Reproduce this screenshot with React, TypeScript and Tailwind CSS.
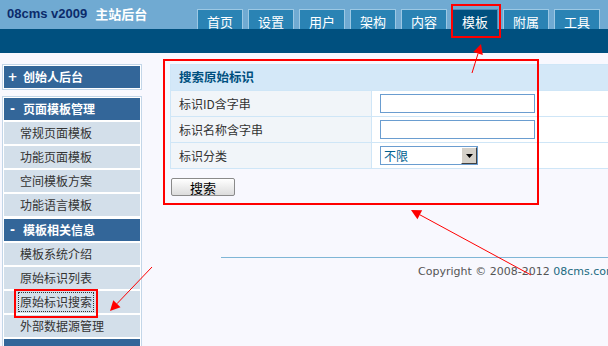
import React from 'react';

const cjk = { fontFamily: '"Noto Sans CJK SC", "Liberation Sans", sans-serif' };

const tabs = ['首页', '设置', '用户', '架构', '内容', '模板', '附属', '工具'];

interface SideBlock {
  title: string;
  open: boolean;
  items: string[];
}

const blocks: SideBlock[] = [
  { title: '创始人后台', open: false, items: [] },
  { title: '页面模板管理', open: true, items: ['常规页面模板', '功能页面模板', '空间模板方案', '功能语言模板'] },
  { title: '模板相关信息', open: true, items: ['模板系统介绍', '原始标识列表', '原始标识搜索', '外部数据源管理'] },
];

// red annotation arrow, head drawn at (x2, y2)
function Arrow({ x1, y1, x2, y2 }: { x1: number; y1: number; x2: number; y2: number }) {
  const a = Math.atan2(y2 - y1, x2 - x1);
  const len = 10;
  const w = 5;
  const bx = x2 - Math.cos(a) * len;
  const by = y2 - Math.sin(a) * len;
  const p1 = `${bx + Math.sin(a) * w},${by - Math.cos(a) * w}`;
  const p2 = `${bx - Math.sin(a) * w},${by + Math.cos(a) * w}`;
  return (
    <g>
      <line x1={x1} y1={y1} x2={bx} y2={by} stroke="#ff0000" strokeWidth="1" />
      <polygon points={`${x2},${y2} ${p1} ${p2}`} fill="#ff0000" />
    </g>
  );
}

export default function App() {
  return (
    <div className="relative w-[608px] h-[346px] overflow-hidden bg-[#f8f8fe] text-[12px]" style={cjk}>
      {/* Header */}
      <div className="h-[29px] bg-[#70aad2] flex items-end">
        <div className="w-[197px] h-full flex items-center pl-[7px] pb-[1px] font-bold text-[13px]">
          <span className="text-[#0b2b6b]" style={{ fontFamily: '"Liberation Sans", sans-serif' }}>08cms v2009</span>
          <span className="text-white ml-[8px]">主站后台</span>
        </div>
        <div className="flex items-end gap-[5px]">
          {tabs.map((t) => (
            <div
              key={t}
              className={`w-[46px] h-[20px] border border-b-0 flex items-center justify-center text-white text-[13px] leading-none pt-[3px] ${
                t === '模板' ? 'bg-[#00507f] border-[#4f8cb8]' : 'bg-[#2a83b4] border-[#9cc8e4]'
              }`}
            >
              {t}
            </div>
          ))}
        </div>
      </div>
      <div className="h-[24px] bg-[#00507f]" />

      {/* Body */}
      <div className="flex">
        {/* Sidebar */}
        <div className="w-[142px] pl-[2px] pt-[11px] flex flex-col">
          {blocks.map((b, bi) => (
            <div
              key={b.title}
              className={`border border-[#c3d6e8] bg-white p-[1px] flex flex-col gap-[2px] ${bi === 0 ? 'mb-[6px]' : bi === 1 ? 'border-b-0 pb-[2px]' : 'border-t-0 h-[200px]'}`}
            >
              <div className="h-[22px] bg-[#336699] text-white font-bold flex items-center">
                <span className="w-[17px] text-center" style={{ fontFamily: '"DejaVu Sans", sans-serif' }}>{b.open ? '-' : '+'}</span>
                <span className="ml-[2px]">{b.title}</span>
              </div>
              {b.items.map((it) => (
                <div key={it} className="h-[22px] bg-[#d3dfea] text-[#333333] flex items-center pl-[15px]">
                  <span className={it === '原始标识搜索' ? 'outline outline-1 outline-dotted outline-[#333] px-[1px] leading-[18px]' : 'px-[1px]'}>{it}</span>
                </div>
              ))}
              {bi === 2 && <div className="h-[22px] bg-[#336699]" />}
            </div>
          ))}
        </div>

        {/* Main content */}
        <div className="flex-1 pl-[28px] pt-[11px] min-w-0">
          <div className="w-[460px] border border-[#cfe6f7]">
            <div className="h-[25px] bg-[#d4e8f8] text-[#00507f] font-bold flex items-center pl-[8px] text-[12.5px]">搜索原始标识</div>
            {['标识ID含字串', '标识名称含字串', '标识分类'].map((label, i) => (
              <div key={label} className="h-[26px] flex border-t border-[#cfe6f7]">
                <div className="w-[201px] bg-[#f1f5f9] border-r border-[#cfe6f7] text-[#333333] flex items-center pl-[8px]">{label}</div>
                <div className="flex-1 bg-white flex items-center pl-[8px]">
                  {i < 2 ? (
                    <div className="w-[155px] h-[19px] border border-[#6a9dd0] bg-white" />
                  ) : (
                    <div className="w-[98px] h-[19px] border border-[#6a9dd0] bg-white flex items-center">
                      <span className="flex-1 pl-[3px] text-[#00608f] leading-none">不限</span>
                      <div className="w-[16px] h-[17px] bg-[#d4d0c8] border-r border-b border-[#404040] border-t border-l border-t-white border-l-white flex items-center justify-center">
                        <svg width="7" height="4" viewBox="0 0 7 4"><polygon points="0,0 7,0 3.5,4" fill="#000" /></svg>
                      </div>
                    </div>
                  )}
                </div>
              </div>
            ))}
          </div>
          <div className="mt-[9px] ml-[1px] w-[64px] h-[18px] border border-[#8a8a8a] rounded-[2px] bg-gradient-to-b from-white to-[#dcdcdc] flex items-center justify-center text-black text-[13px] leading-none">
            搜索
          </div>
          <div className="mt-[61px] ml-[51px] h-[1px] bg-[#7fb6d6]" />
          <div className="mt-[6px] ml-[248px] whitespace-nowrap text-[11px] text-[#555555]" style={{ fontFamily: '"DejaVu Sans", sans-serif' }}>
            Copyright © 2008-2012 <span className="text-[#1a6a80]">08cms.com</span>
          </div>
        </div>
      </div>

      {/* Annotation boxes */}
      <div className="absolute left-[451px] top-[4px] w-[50px] h-[34px] border-2 border-[#ff0000]" />
      <div className="absolute left-[163px] top-[59px] w-[376px] h-[146px] border-2 border-[#ff0000]" />
      <div className="absolute left-[14px] top-[289px] w-[84px] h-[29px] border-2 border-[#ff0000]" />

      <svg className="absolute inset-0" width="608" height="346">
        <Arrow x1={472} y1={73} x2={481} y2={44} />
        <Arrow x1={531} y1={275} x2={411} y2={210} />
        <Arrow x1={152} y1={267} x2={110} y2={311} />
      </svg>
    </div>
  );
}
